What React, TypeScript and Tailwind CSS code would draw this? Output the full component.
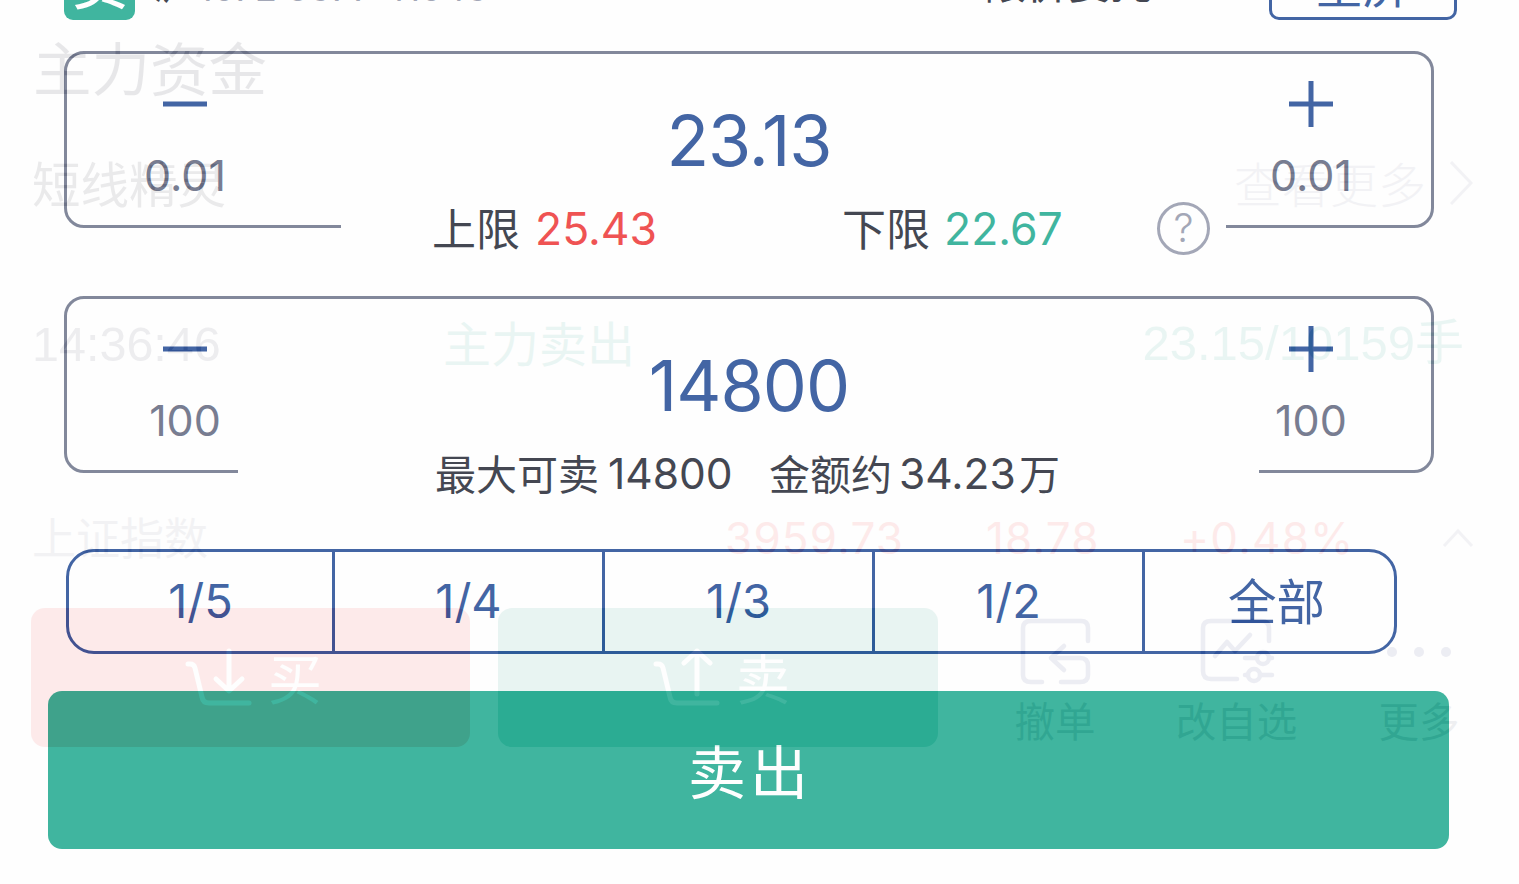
import { clsx } from "clsx";

const CJK = "font-['Inter','Noto_Sans_CJK_SC',sans-serif]";
const ARIAL = "font-['Liberation_Sans','Noto_Sans_CJK_SC',sans-serif]";

const MinusIcon = () => (
  <svg width="46" height="48" viewBox="0 0 46 48" stroke="currentColor" strokeWidth="5">
    <path d="M1 24H45" />
  </svg>
);

const PlusIcon = () => (
  <svg width="46" height="48" viewBox="0 0 46 48" stroke="currentColor" strokeWidth="5">
    <path d="M1 24H45M23 1V47" />
  </svg>
);

const CartIcon = ({ up = false }: { up?: boolean }) => (
  <svg
    width="70"
    height="60"
    viewBox="0 0 70 60"
    fill="none"
    stroke="currentColor"
    strokeWidth="5"
    strokeLinecap="round"
    strokeLinejoin="round"
  >
    <path d="M3 16H5Q9 16 10 20L17 49Q18 55 24 55H64" />
    <path d={up ? "M44 46V3M31 15L44 3L57 15" : "M44 3V42M31 31L44 43L57 31"} />
  </svg>
);

const CancelIcon = () => (
  <svg
    className="shrink-0"
    width="72"
    height="68"
    viewBox="0 0 72 68"
    fill="none"
    stroke="currentColor"
    strokeWidth="4.5"
    strokeLinecap="round"
    strokeLinejoin="round"
  >
    <path d="M69 24V11Q69 4 62 4H12Q4 4 4 11V58Q4 65 12 65H23" />
    <path d="M42 65H61Q69 65 69 58V49Q69 41 61 41H32M45 29L32 41L45 53" />
  </svg>
);

const EditIcon = () => (
  <svg
    className="shrink-0"
    width="76"
    height="68"
    viewBox="0 0 76 68"
    fill="none"
    stroke="currentColor"
    strokeWidth="4.5"
    strokeLinecap="round"
    strokeLinejoin="round"
  >
    <path d="M70 24V11Q70 4 62 4H12Q4 4 4 11V54Q4 62 12 62H38" />
    <path d="M16 39L28 25L36 34L51 18" />
    <path d="M46 41H56M71 41H73M46 58H48M62 58H73" />
    <circle cx="64" cy="41" r="6" />
    <circle cx="55" cy="58" r="6" />
  </svg>
);

const DotsIcon = () => (
  <svg className="shrink-0" width="68" height="68" viewBox="0 0 68 68" fill="currentColor">
    <circle cx="7" cy="35" r="5" />
    <circle cx="34" cy="35" r="5" />
    <circle cx="61" cy="35" r="5" />
  </svg>
);

const actions = [
  { label: "撤单", icon: <CancelIcon />, width: "w-[160px]" },
  { label: "改自选", icon: <EditIcon />, width: "w-[203px]" },
  { label: "更多", icon: <DotsIcon />, width: "w-[162px]" },
];

// Quote page that shows through the translucent order sheet
const QuotePage = () => (
  <div className="col-start-1 row-start-1 h-[884px] w-[1519px] overflow-hidden bg-[#fefefe]">
    <div className="flex h-[138px] items-center pt-[2px] pl-[33px] text-[58.5px] text-[#1c1c30]">主力资金</div>
    <div className="flex h-[92px] items-center justify-between pt-[4px] pr-[46px] pl-[32px] text-[48.5px] text-[#32323f]">
      <span>短线精灵</span>
      <span className="flex items-center gap-[24px] font-light text-[#8d8da8]">
        <span className="text-[48px]">查看更多</span>
        <svg
          className="mb-[6px]"
          width="23"
          height="44"
          viewBox="0 0 23 44"
          fill="none"
          stroke="currentColor"
          strokeWidth="3"
        >
          <path d="M1 1L21 22L1 43" />
        </svg>
      </span>
    </div>
    <div className={clsx("mt-[84px] flex h-[60px] items-center text-[48.5px]", ARIAL)}>
      <span className="w-[443px] pl-[32px] text-[#50506a]">14:36:46</span>
      <span className="flex-1 pt-[3px] text-[48px] text-[#30a890]">主力卖出</span>
      <span className="pr-[55px] text-[49px] text-[#30a890]">23.15/10159手</span>
    </div>
    <div className="mt-[134px] flex h-[60px] items-center text-[44px] text-[#f53737]">
      <span className="w-[725px] pt-[2px] pl-[32px] text-[#8d8da0]">上证指数</span>
      <span className="w-[261px] tracking-[1.2px]">3959.73</span>
      <span className="w-[194px] tracking-[1.2px]">18.78</span>
      <span className="w-[262px] tracking-[1.2px]">+0.48%</span>
      <svg width="32" height="20" viewBox="0 0 32 20" fill="none" stroke="#8d8da8" strokeWidth="3">
        <path d="M2 18L16 3L30 18" />
      </svg>
    </div>
    <div className="mt-[40px] flex h-[139px]">
      <div className="ml-[31px] flex w-[439px] items-center rounded-[14px] bg-[#f53737] pl-[154px] text-[54px] text-white">
        <CartIcon />
        <span className="ml-[13px] pt-[6px]">买</span>
      </div>
      <div className="ml-[28px] flex w-[440px] items-center rounded-[14px] bg-[#239b87] pl-[155px] text-[54px] text-white">
        <CartIcon up />
        <span className="ml-[13px] pt-[6px]">卖</span>
      </div>
      <div className="ml-[37px] flex text-[#4b5091]">
        {actions.map((action) => (
          <div key={action.label} className={clsx("flex flex-col items-center pt-[9px]", action.width)}>
            {action.icon}
            <span className="mt-[10px] text-[40.5px] leading-[56px] text-[#60657c]">{action.label}</span>
          </div>
        ))}
      </div>
    </div>
  </div>
);

type StepperProps = { step: string; value: string };

const Stepper = ({ step, value }: StepperProps) => (
  <div className="ml-[64px] flex h-[177px] w-[1370px] justify-between rounded-[20px] border-3 border-[#757c91] text-[#2f559b]">
    <button className="flex w-[236px] flex-col items-center pt-[26px]">
      <MinusIcon />
      <span className="mt-[17px] text-[43px] leading-[60px] text-[#6a7086]">{step}</span>
    </button>
    <span className="pt-[45px] pl-[4px] text-[70px] leading-[84px] tracking-[-1px]">{value}</span>
    <button className="flex w-[240px] flex-col items-center pt-[26px]">
      <PlusIcon />
      <span className="mt-[17px] text-[43px] leading-[60px] text-[#6a7086]">{step}</span>
    </button>
  </div>
);

const fractions = [
  { label: "1/5", width: "w-[266px]" },
  { label: "1/4", width: "w-[270px]" },
  { label: "1/3", width: "w-[270px]" },
  { label: "1/2", width: "w-[270px]" },
  { label: "全部", width: "flex-1 pl-[14px] pt-[4px] text-[48.5px]" },
];

const OrderSheet = () => (
  <div className="col-start-1 row-start-1 h-[884px] w-[1519px] overflow-hidden bg-[#fefefe] opacity-90">
    <div className="flex h-5 items-end overflow-hidden text-[42px] whitespace-nowrap text-[#303440]">
      <div className="ml-[64px] h-[70px] w-[71px] shrink-0 rounded-[9px] bg-[#2cae95] text-center text-[56px] leading-[69px] font-medium text-white">
        卖
      </div>
      <span className="ml-[18px] w-[45px] leading-[72px]">沪</span>
      <span className="w-[786px] text-[36px] leading-[63px] text-[#9a9eb0]">1072 5677 41046</span>
      <span className="w-[285px] leading-[72px]">限价委托</span>
      <div className="h-[70px] w-[188px] shrink-0 rounded-[10px] border-3 border-[#2f559b] text-center text-[48px] leading-[66px] text-[#2f559b]">
        全屏
      </div>
    </div>

    <div className="mt-[31px]">
      <Stepper step="0.01" value="23.13" />
      <div className="-mt-[29px] ml-[341px] flex h-[60px] w-[885px] items-center bg-[#fefefe] text-[44.5px] text-[#303440]">
        <span className="ml-[91px] w-[103px] pt-[2px] text-[44px]">上限</span>
        <span className="w-[307px] text-[#ee4141]">25.43</span>
        <span className="w-[102px] pt-[2px] text-[44px]">下限</span>
        <span className="w-[213px] text-[#2cae95]">22.67</span>
        <span className="mb-[2px] flex size-[53px] items-center justify-center rounded-full border-3 border-[#9a9eb0] text-[40px] font-light text-[#9a9eb0]">
          ?
        </span>
      </div>
    </div>

    <div className="mt-[37px]">
      <Stepper step="100" value="14800" />
      <div className="-mt-[28px] ml-[238px] flex h-[60px] w-[1021px] items-center bg-[#fefefe] text-[42.5px] text-[#303440]">
        <span className="ml-[197px] w-[173px] pt-[2px] text-[41px]">最大可卖</span>
        <span className="w-[161px] pb-[2px]">14800</span>
        <span className="w-[130px] pt-[2px] text-[41px]">金额约</span>
        <span className="w-[120px] pb-[2px]">34.23</span>
        <span className="pt-[2px] text-[41px]">万</span>
      </div>
    </div>

    <div className="mt-[44px] ml-[66px] flex h-[105px] w-[1331px] divide-x-3 divide-[#2f559b] rounded-[28px] border-3 border-[#2f559b] text-[47px] text-[#2f559b]">
      {fractions.map((item) => (
        <button key={item.label} className={clsx("flex items-center justify-center", item.width)}>
          {item.label}
        </button>
      ))}
    </div>

    <button className="mt-[37px] ml-[48px] block h-[158px] w-[1401px] rounded-[14px] bg-[#2cae95] pt-[6px] pl-[3px] text-[58px] tracking-[4px] text-white">
      卖出
    </button>
  </div>
);

export default function App() {
  return (
    <div className={clsx("grid h-[884px] w-[1519px] overflow-hidden", CJK)}>
      <QuotePage />
      <OrderSheet />
    </div>
  );
}
